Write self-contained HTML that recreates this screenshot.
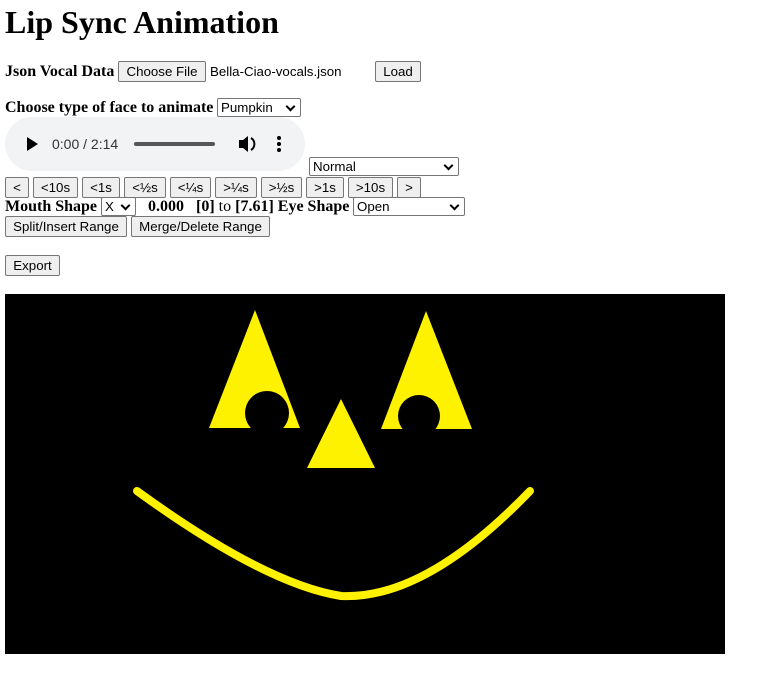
<!DOCTYPE html>
<html><head><style>
body{margin:0;width:761px;height:686px;background:#fff;font-family:"Liberation Serif",serif;position:relative;overflow:hidden}
.a{position:absolute;white-space:nowrap}
h1{position:absolute;left:5px;top:4px;margin:0;font-size:32px;font-weight:bold}
b{font-size:16px}
.btn{position:absolute;height:21px;box-sizing:border-box;border:1px solid #767676;border-radius:2px;background:#efefef;font:13.3px "Liberation Sans",sans-serif;color:#000;display:flex;align-items:center;justify-content:center}
.sel{position:absolute;height:19px;box-sizing:border-box;border:1px solid #767676;border-radius:2px;background:#fff;font:13.3px "Liberation Sans",sans-serif;padding-left:3px;line-height:17px}
.sel:after{content:"";position:absolute;right:6px;top:4px;width:5px;height:5px;border-right:2px solid #000;border-bottom:2px solid #000;transform:rotate(45deg)}
.t{font:13.3px "Liberation Sans",sans-serif}
</style></head><body>
<h1>Lip Sync Animation</h1>
<div class="a" style="left:5px;top:63px"><b>Json Vocal Data</b></div>
<div class="btn" style="left:118px;top:61px;width:88px">Choose File</div>
<div class="a t" style="left:210px;top:64px">Bella-Ciao-vocals.json</div>
<div class="btn" style="left:375px;top:61px;width:46px">Load</div>
<div class="a" style="left:5px;top:99px"><b>Choose type of face to animate</b></div>
<div class="sel" style="left:217px;top:98px;width:84px">Pumpkin</div>
<div class="a" style="left:5px;top:117px;width:300px;height:54px;border-radius:27px;background:#f1f3f4"></div>
<svg class="a" style="left:5px;top:117px" width="300" height="54">
<path d="M22 20 L22 34 L33 27Z" fill="#000"/>
<text x="47" y="32" font-family="Liberation Sans" font-size="14" fill="#333">0:00 / 2:14</text>
<rect x="129" y="25" width="81" height="4" rx="2" fill="#555"/>
<path d="M234 23h4l5-4v16l-5-4h-4z" fill="#000"/><path d="M246 21a7 7 0 0 1 0 12" stroke="#000" stroke-width="2" fill="none"/>
<circle cx="274" cy="21" r="2" fill="#000"/><circle cx="274" cy="27" r="2" fill="#000"/><circle cx="274" cy="33" r="2" fill="#000"/>
</svg>
<div class="sel" style="left:309px;top:157px;width:150px">Normal</div>
<div class="btn" style="left:5px;top:177px;width:24px">&lt;</div>
<div class="btn" style="left:33px;top:177px;width:45px">&lt;10s</div>
<div class="btn" style="left:82px;top:177px;width:38px">&lt;1s</div>
<div class="btn" style="left:124px;top:177px;width:42px">&lt;½s</div>
<div class="btn" style="left:170px;top:177px;width:41px">&lt;¼s</div>
<div class="btn" style="left:215px;top:177px;width:42px">&gt;¼s</div>
<div class="btn" style="left:261px;top:177px;width:41px">&gt;½s</div>
<div class="btn" style="left:306px;top:177px;width:38px">&gt;1s</div>
<div class="btn" style="left:348px;top:177px;width:45px">&gt;10s</div>
<div class="btn" style="left:397px;top:177px;width:24px">&gt;</div>
<div class="a" style="left:5px;top:198px"><b>Mouth Shape</b></div>
<div class="sel" style="left:101px;top:197px;width:35px">X</div>
<div class="a" style="left:148px;top:198px"><b>0.000</b>&nbsp;&nbsp; <b>[0]</b> to <b>[7.61]</b> <b>Eye Shape</b></div>
<div class="sel" style="left:353px;top:197px;width:112px">Open</div>
<div class="btn" style="left:5px;top:216px;width:122px">Split/Insert Range</div>
<div class="btn" style="left:131px;top:216px;width:139px">Merge/Delete Range</div>
<div class="btn" style="left:5px;top:255px;width:55px">Export</div>
<svg class="a" style="left:5px;top:294px" width="720" height="360">
<rect width="720" height="360" fill="#000"/>
<g fill="#fff200" transform="translate(-5,-294)">
<path d="M255 310 L300 428 L209 428Z"/><path d="M426 311 L472 429 L381 429Z"/><path d="M341 399 L375 468 L307 468Z"/>
</g>
<g fill="#000" transform="translate(-5,-294)">
<circle cx="267" cy="413" r="22"/>
<circle cx="419" cy="416" r="21"/>
</g>
<path d="M132 197 Q260 290 336 302 Q420 306 525 197" stroke="#fff200" stroke-width="8" fill="none" stroke-linecap="round"/>
</svg>
</body></html>
